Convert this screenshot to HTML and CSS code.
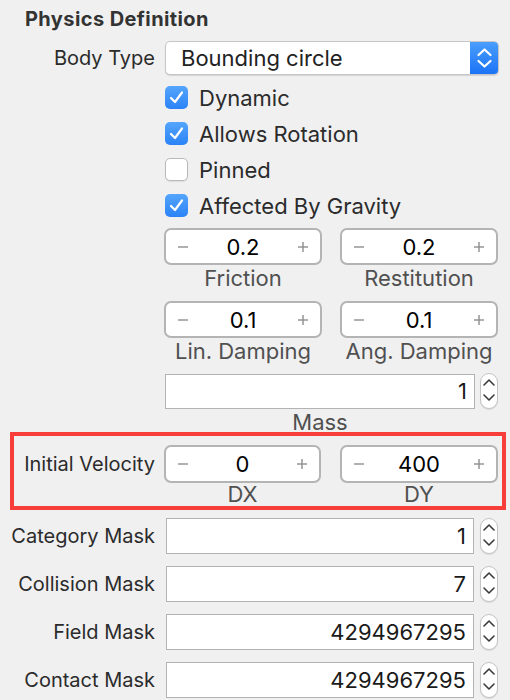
FILE: index.html
```html
<!DOCTYPE html>
<html>
<head>
<meta charset="utf-8">
<link rel="stylesheet" href="styles.css">
</head>
<body>
<div class="panel">
  <div class="heading">Physics Definition</div>

  <div class="row select-row">
    <div class="lbl">Body Type</div>
    <div class="select">
      <span class="select-text">Bounding circle</span>
      <span class="select-btn">
        <svg width="29" height="34" viewBox="0 0 29 34"><polyline points="8.5,14 14.5,8.5 20.5,14" fill="none" stroke="#fff" stroke-width="2.2" stroke-linecap="round" stroke-linejoin="round"/><polyline points="8.5,20 14.5,25.5 20.5,20" fill="none" stroke="#fff" stroke-width="2.2" stroke-linecap="round" stroke-linejoin="round"/></svg>
      </span>
    </div>
  </div>

  <div class="checks">
    <div class="check"><span class="box on"><svg width="23" height="23" viewBox="0 0 23 23"><polyline points="6,12 10,16 17,6.5" fill="none" stroke="#fff" stroke-width="2.2" stroke-linecap="round" stroke-linejoin="round"/></svg></span>Dynamic</div>
    <div class="check"><span class="box on"><svg width="23" height="23" viewBox="0 0 23 23"><polyline points="6,12 10,16 17,6.5" fill="none" stroke="#fff" stroke-width="2.2" stroke-linecap="round" stroke-linejoin="round"/></svg></span>Allows Rotation</div>
    <div class="check"><span class="box off"></span>Pinned</div>
    <div class="check"><span class="box on"><svg width="23" height="23" viewBox="0 0 23 23"><polyline points="6,12 10,16 17,6.5" fill="none" stroke="#fff" stroke-width="2.2" stroke-linecap="round" stroke-linejoin="round"/></svg></span>Affected By Gravity</div>
  </div>

  <div class="pair first">
    <div class="col">
      <div class="stepper"><svg class="pm" width="10" height="10" viewBox="0 0 10 10"><line x1="0" y1="5" x2="10" y2="5" stroke="#8e8e8e" stroke-width="1.4"/></svg><span class="val">0.2</span><svg class="pm" width="10" height="10" viewBox="0 0 10 10"><line x1="0" y1="5" x2="10" y2="5" stroke="#8e8e8e" stroke-width="1.4"/><line x1="5" y1="0" x2="5" y2="10" stroke="#8e8e8e" stroke-width="1.4"/></svg></div>
      <div class="cap">Friction</div>
    </div>
    <div class="col">
      <div class="stepper"><svg class="pm" width="10" height="10" viewBox="0 0 10 10"><line x1="0" y1="5" x2="10" y2="5" stroke="#8e8e8e" stroke-width="1.4"/></svg><span class="val">0.2</span><svg class="pm" width="10" height="10" viewBox="0 0 10 10"><line x1="0" y1="5" x2="10" y2="5" stroke="#8e8e8e" stroke-width="1.4"/><line x1="5" y1="0" x2="5" y2="10" stroke="#8e8e8e" stroke-width="1.4"/></svg></div>
      <div class="cap">Restitution</div>
    </div>
  </div>

  <div class="pair second">
    <div class="col">
      <div class="stepper"><svg class="pm" width="10" height="10" viewBox="0 0 10 10"><line x1="0" y1="5" x2="10" y2="5" stroke="#8e8e8e" stroke-width="1.4"/></svg><span class="val">0.1</span><svg class="pm" width="10" height="10" viewBox="0 0 10 10"><line x1="0" y1="5" x2="10" y2="5" stroke="#8e8e8e" stroke-width="1.4"/><line x1="5" y1="0" x2="5" y2="10" stroke="#8e8e8e" stroke-width="1.4"/></svg></div>
      <div class="cap">Lin. Damping</div>
    </div>
    <div class="col">
      <div class="stepper"><svg class="pm" width="10" height="10" viewBox="0 0 10 10"><line x1="0" y1="5" x2="10" y2="5" stroke="#8e8e8e" stroke-width="1.4"/></svg><span class="val">0.1</span><svg class="pm" width="10" height="10" viewBox="0 0 10 10"><line x1="0" y1="5" x2="10" y2="5" stroke="#8e8e8e" stroke-width="1.4"/><line x1="5" y1="0" x2="5" y2="10" stroke="#8e8e8e" stroke-width="1.4"/></svg></div>
      <div class="cap">Ang. Damping</div>
    </div>
  </div>

  <div class="mass">
    <div class="mass-line">
      <div class="field mass-field">1</div>
      <span class="spin"><svg width="18" height="36" viewBox="0 0 18 36"><polyline points="4,12 9,7 14,12" fill="none" stroke="#3a3a3a" stroke-width="1.6" stroke-linecap="round" stroke-linejoin="round"/><polyline points="4,22 9,27 14,22" fill="none" stroke="#3a3a3a" stroke-width="1.6" stroke-linecap="round" stroke-linejoin="round"/></svg></span>
    </div>
    <div class="cap mass-cap">Mass</div>
  </div>

  <div class="velocity">
    <div class="vlbl">Initial Velocity</div>
    <div class="vpair">
      <div class="col">
        <div class="stepper v"><svg class="pm" width="10" height="10" viewBox="0 0 10 10"><line x1="0" y1="5" x2="10" y2="5" stroke="#8e8e8e" stroke-width="1.4"/></svg><span class="val">0</span><svg class="pm" width="10" height="10" viewBox="0 0 10 10"><line x1="0" y1="5" x2="10" y2="5" stroke="#8e8e8e" stroke-width="1.4"/><line x1="5" y1="0" x2="5" y2="10" stroke="#8e8e8e" stroke-width="1.4"/></svg></div>
        <div class="cap vcap">DX</div>
      </div>
      <div class="col">
        <div class="stepper v"><svg class="pm" width="10" height="10" viewBox="0 0 10 10"><line x1="0" y1="5" x2="10" y2="5" stroke="#8e8e8e" stroke-width="1.4"/></svg><span class="val">400</span><svg class="pm" width="10" height="10" viewBox="0 0 10 10"><line x1="0" y1="5" x2="10" y2="5" stroke="#8e8e8e" stroke-width="1.4"/><line x1="5" y1="0" x2="5" y2="10" stroke="#8e8e8e" stroke-width="1.4"/></svg></div>
        <div class="cap vcap">DY</div>
      </div>
    </div>
  </div>

  <div class="masks">
    <div class="row mrow">
      <div class="lbl">Category Mask</div>
      <div class="field">1</div>
      <span class="spin"><svg width="18" height="36" viewBox="0 0 18 36"><polyline points="4,12 9,7 14,12" fill="none" stroke="#3a3a3a" stroke-width="1.6" stroke-linecap="round" stroke-linejoin="round"/><polyline points="4,22 9,27 14,22" fill="none" stroke="#3a3a3a" stroke-width="1.6" stroke-linecap="round" stroke-linejoin="round"/></svg></span>
    </div>
    <div class="row mrow">
      <div class="lbl">Collision Mask</div>
      <div class="field">7</div>
      <span class="spin"><svg width="18" height="36" viewBox="0 0 18 36"><polyline points="4,12 9,7 14,12" fill="none" stroke="#3a3a3a" stroke-width="1.6" stroke-linecap="round" stroke-linejoin="round"/><polyline points="4,22 9,27 14,22" fill="none" stroke="#3a3a3a" stroke-width="1.6" stroke-linecap="round" stroke-linejoin="round"/></svg></span>
    </div>
    <div class="row mrow">
      <div class="lbl">Field Mask</div>
      <div class="field">4294967295</div>
      <span class="spin"><svg width="18" height="36" viewBox="0 0 18 36"><polyline points="4,12 9,7 14,12" fill="none" stroke="#3a3a3a" stroke-width="1.6" stroke-linecap="round" stroke-linejoin="round"/><polyline points="4,22 9,27 14,22" fill="none" stroke="#3a3a3a" stroke-width="1.6" stroke-linecap="round" stroke-linejoin="round"/></svg></span>
    </div>
    <div class="row mrow">
      <div class="lbl">Contact Mask</div>
      <div class="field">4294967295</div>
      <span class="spin"><svg width="18" height="36" viewBox="0 0 18 36"><polyline points="4,12 9,7 14,12" fill="none" stroke="#3a3a3a" stroke-width="1.6" stroke-linecap="round" stroke-linejoin="round"/><polyline points="4,22 9,27 14,22" fill="none" stroke="#3a3a3a" stroke-width="1.6" stroke-linecap="round" stroke-linejoin="round"/></svg></span>
    </div>
  </div>
</div>
</body>
</html>
```

FILE: styles.css
```css
* { box-sizing: border-box; }
html, body { margin: 0; padding: 0; }
body {
  background: #f0f0f0;
  font-family: Inter, "Liberation Sans", Arial, sans-serif;
  font-size: 22px;
  color: #2b2b2b;
  width: 510px;
  height: 700px;
  overflow: hidden;
}
.panel { display: flex; flex-direction: column; }

.heading {
  margin: 7px 0 0 25px;
  font-weight: 700;
  font-size: 20px;
  letter-spacing: 0.4px;
  line-height: 24px;
  color: #333;
}

.row { display: flex; align-items: center; }
.lbl { width: 155px; flex: none; text-align: right; white-space: nowrap; font-size: 20px; }

.select-row { margin-top: 10px; }
.select {
  margin-left: 10px;
  width: 334px;
  height: 34px;
  display: flex;
  align-items: center;
  background: #fff;
  border: 1px solid #c6c6c6;
  border-radius: 5px;
  box-shadow: 0 1px 1px rgba(0,0,0,0.12);
  overflow: hidden;
}
.select-text { flex: 1; padding-left: 15px; color: #222; }
.select-btn {
  width: 29px;
  height: 34px;
  margin: -1px -1px -1px 0;
  background: linear-gradient(#4b9ffc, #1a72f6);
  display: flex;
}

.checks {
  margin: 11px 0 0 165px;
  display: flex;
  flex-direction: column;
  gap: 13px;
}
.check {
  display: flex;
  align-items: center;
  gap: 11px;
  height: 23px;
  white-space: nowrap;
}
.box {
  width: 23px;
  height: 23px;
  border-radius: 5px;
  flex: none;
  display: flex;
}
.box.on { background: linear-gradient(#55a5fc, #2b83f6); }
.box.off { background: #fff; border: 1px solid #b9b9b9; box-shadow: 0 1px 1px rgba(0,0,0,0.08); }

.pair {
  margin-left: 164px;
  display: grid;
  grid-template-columns: 158px 158px;
  column-gap: 18px;
}
.pair.first { margin-top: 11px; }
.pair.second { margin-top: 10px; }
.col { display: flex; flex-direction: column; }
.stepper {
  height: 37px;
  background: #fff;
  border: 2px solid #b4b4b4;
  border-radius: 7px;
  display: flex;
  align-items: center;
  padding: 0 12px 0 12px;
}
.stepper.v { height: 38px; }
.pm { flex: none; }
.val { flex: 1; text-align: center; color: #000; }
.cap { text-align: center; line-height: 26px; color: #505050; white-space: nowrap; }

.mass { margin: 9px 0 0 165px; }
.mass-line { display: flex; align-items: center; }
.field {
  height: 36px;
  width: 308px;
  background: #fff;
  border: 1px solid #b3b3b3;
  text-align: right;
  padding-right: 7px;
  line-height: 34px;
  color: #1a1a1a;
}
.mass-field { width: 310px; height: 35px; line-height: 33px; }
.spin {
  width: 18px;
  height: 36px;
  margin-left: 5px;
  background: #fff;
  border: 1px solid #c4c4c4;
  border-radius: 9px;
  box-shadow: 0 1px 1px rgba(0,0,0,0.1);
  display: flex;
  align-items: center;
  justify-content: center;
  overflow: hidden;
}
.spin svg { flex: none; }
.mass-cap { width: 310px; }

.velocity {
  margin: -3px 0 0 10px;
  width: 496px;
  height: 78px;
  border: 4px solid #f73e3b;
  padding-top: 9px;
  display: flex;
  align-items: flex-start;
}
.vlbl { width: 141px; flex: none; text-align: right; line-height: 38px; white-space: nowrap; font-size: 20px; }
.vpair {
  margin-left: 9px;
  display: grid;
  grid-template-columns: 157px 158px;
  column-gap: 19px;
}
.vcap { line-height: 23px; }

.masks { margin-top: 8px; display: flex; flex-direction: column; gap: 12px; }
.mrow .field { margin-left: 11px; }
.mrow .spin { margin-left: 6px; }
```
